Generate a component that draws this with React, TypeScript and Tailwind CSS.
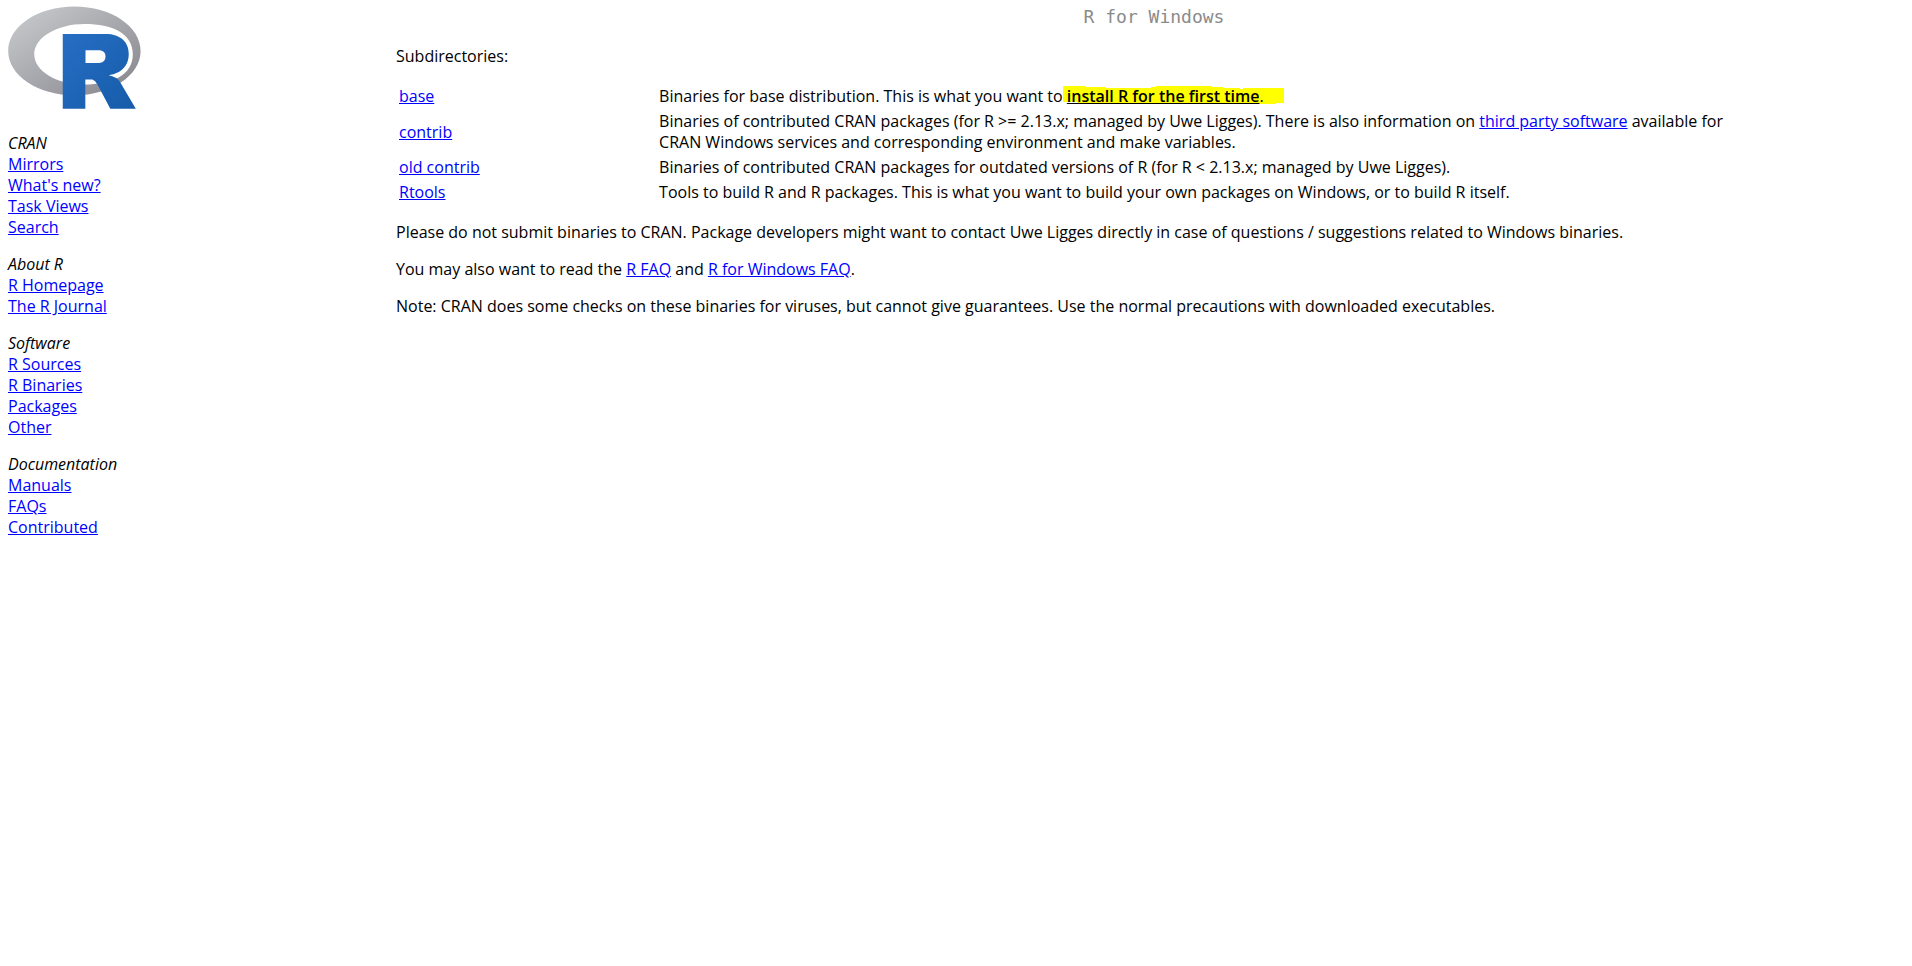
import type { ReactNode } from 'react';

const A = ({ children }: { children: ReactNode }) => (
  <a href="#" className="text-[#0000ff] underline">
    {children}
  </a>
);

const menu = [
  { title: 'CRAN', links: ['Mirrors', "What's new?", 'Task Views', 'Search'] },
  { title: 'About R', links: ['R Homepage', 'The R Journal'] },
  { title: 'Software', links: ['R Sources', 'R Binaries', 'Packages', 'Other'] },
  { title: 'Documentation', links: ['Manuals', 'FAQs', 'Contributed'] },
];

function Logo() {
  return (
    <svg viewBox="0 0 724 561" className="block h-[103px] w-[133px]" role="img" aria-label="R">
      <defs>
        <linearGradient id="ring" x1="0" y1="0" x2="1" y2="1">
          <stop offset="0" stopColor="#cbced0" />
          <stop offset="1" stopColor="#84838b" />
        </linearGradient>
        <linearGradient id="letter" x1="0" y1="0" x2="1" y2="1">
          <stop offset="0" stopColor="#276dc3" />
          <stop offset="1" stopColor="#165caa" />
        </linearGradient>
      </defs>
      <path
        fill="url(#ring)"
        fillRule="evenodd"
        d="M361.453,485.937C162.329,485.937,0.906,377.828,0.906,244.469C0.906,111.109,162.329,3,361.453,3C560.578,3,722,111.109,722,244.469C722,377.828,560.578,485.937,361.453,485.937ZM416.641,97.406C265.289,97.406,142.594,171.314,142.594,262.484C142.594,353.654,265.289,427.562,416.641,427.562C567.992,427.562,679.687,377.033,679.687,262.484C679.687,147.971,567.992,97.406,416.641,97.406Z"
      />
      <path
        fill="url(#letter)"
        fillRule="evenodd"
        d="M550,377C550,377,571.822,383.585,584.5,390C588.899,392.226,596.51,396.668,602,402.5C607.378,408.212,610,414,610,414L696,559L557,559.062L492,437C492,437,478.69,414.131,470.5,407.5C463.668,401.969,460.755,400,454,400C449.298,400,420.974,400,420.974,400L421,558.974L298,559.026L298,152.938L545,152.938C545,152.938,657.5,154.967,657.5,262C657.5,369.033,550,377,550,377ZM496.5,241.024L422.037,240.976L422,310.026L496.5,310.002C496.5,310.002,531,309.895,531,274.877C531,239.155,496.5,241.024,496.5,241.024Z"
      />
    </svg>
  );
}

function Highlighted({ children }: { children: ReactNode }) {
  return (
    <span className="relative">
      <svg
        viewBox="0 0 221 20"
        preserveAspectRatio="none"
        className="absolute top-0 -left-1 -z-10 h-5 w-[221px]"
        aria-hidden="true"
      >
        <path
          fill="#ffff00"
          d="M0,1H23V2H42V3H88V2H93V1H149V2H160V3H177V4H180V3H221V18H213V19H189V18H182V19H155V18H97V19H37V18H14V17H0Z"
        />
      </svg>
      {children}
    </span>
  );
}

const rows: { name: string; text: ReactNode }[] = [
  {
    name: 'base',
    text: (
      <>
        Binaries for base distribution. This is what you want to{' '}
        <Highlighted>
          <a href="#" className="font-semibold underline">
            install R for the first time
          </a>
          .
        </Highlighted>
      </>
    ),
  },
  {
    name: 'contrib',
    text: (
      <>
        Binaries of contributed CRAN packages (for R &gt;= 2.13.x; managed by Uwe Ligges). There is
        also information on <A>third party software</A> available for CRAN Windows services and
        corresponding environment and make variables.
      </>
    ),
  },
  {
    name: 'old contrib',
    text: 'Binaries of contributed CRAN packages for outdated versions of R (for R < 2.13.x; managed by Uwe Ligges).',
  },
  {
    name: 'Rtools',
    text: 'Tools to build R and R packages. This is what you want to build your own packages on Windows, or to build R itself.',
  },
];

export default function App() {
  return (
    <div className="isolate flex min-h-screen bg-white font-['Open_Sans','Noto_Sans_CJK_KR',sans-serif] text-[16px] leading-[21px] text-black">
      <nav className="w-[388px] shrink-0 px-2 pt-[6px]">
        <Logo />
        <div className="mt-6 flex flex-col gap-4">
          {menu.map((group) => (
            <section key={group.title}>
              <h2 className="italic">{group.title}</h2>
              <ul>
                {group.links.map((link) => (
                  <li key={link}>
                    <A>{link}</A>
                  </li>
                ))}
              </ul>
            </section>
          ))}
        </div>
      </nav>

      <main className="flex min-w-0 grow flex-col gap-4 pt-[7px] pl-2">
        <h1 className="mb-[3px] text-center font-['DejaVu_Sans_Mono',monospace] text-[18px] leading-5 text-[#8b8b8b]">
          R for Windows
        </h1>
        <p>Subdirectories:</p>
        <table className="w-[90%] border-separate border-spacing-[2px] text-left">
          <tbody>
            {rows.map((row) => (
              <tr key={row.name}>
                <td className="w-[19%] p-px align-middle">
                  <A>{row.name}</A>
                </td>
                <td className="p-px align-middle">{row.text}</td>
              </tr>
            ))}
          </tbody>
        </table>
        <p>
          Please do not submit binaries to CRAN. Package developers might want to contact Uwe Ligges
          directly in case of questions / suggestions related to Windows binaries.
        </p>
        <p>
          You may also want to read the <A>R FAQ</A> and <A>R for Windows FAQ</A>.
        </p>
        <p>
          Note: CRAN does some checks on these binaries for viruses, but cannot give guarantees. Use
          the normal precautions with downloaded executables.
        </p>
      </main>
    </div>
  );
}
